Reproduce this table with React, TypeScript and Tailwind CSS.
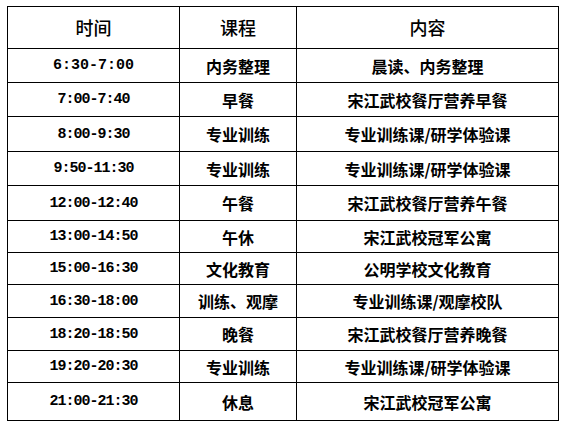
const rows = [
  { time: '6:30-7:00', course: '内务整理', content: '晨读、内务整理', h: 'h-[34px]', t: 'tracking-[0px]' },
  { time: '7:00-7:40', course: '早餐', content: '宋江武校餐厅营养早餐', h: 'h-[34px]', t: 'tracking-[-1px]' },
  { time: '8:00-9:30', course: '专业训练', content: '专业训练课/研学体验课', h: 'h-[35px]', t: 'tracking-[-1px]' },
  { time: '9:50-11:30', course: '专业训练', content: '专业训练课/研学体验课', h: 'h-[34px]', t: 'tracking-[-1px]' },
  { time: '12:00-12:40', course: '午餐', content: '宋江武校餐厅营养午餐', h: 'h-[35px]', t: 'tracking-[-1px]' },
  { time: '13:00-14:50', course: '午休', content: '宋江武校冠军公寓', h: 'h-[32px]', t: 'tracking-[-1px]' },
  { time: '15:00-16:30', course: '文化教育', content: '公明学校文化教育', h: 'h-[32px]', t: 'tracking-[-1px]' },
  { time: '16:30-18:00', course: '训练、观摩', content: '专业训练课/观摩校队', h: 'h-[33px]', t: 'tracking-[-1px]' },
  { time: '18:20-18:50', course: '晚餐', content: '宋江武校餐厅营养晚餐', h: 'h-[33px]', t: 'tracking-[-1px]' },
  { time: '19:20-20:30', course: '专业训练', content: '专业训练课/研学体验课', h: 'h-[32px]', t: 'tracking-[-1px]' },
  { time: '21:00-21:30', course: '休息', content: '宋江武校冠军公寓', h: 'h-[38px]', t: 'tracking-[-1px]' },
];

const cjk = "font-['Noto_Sans_CJK_SC',sans-serif]";

function Cell({ w, children, className = '' }: { w: string; children: React.ReactNode; className?: string }) {
  return (
    <div className={`${w} flex items-center justify-center border-r border-b border-black ${className}`}>
      {children}
    </div>
  );
}

export default function App() {
  return (
    <div className="w-[564px] h-[428px] bg-white pl-[7px] pt-[6px]">
      <div className="w-[552px] border-l border-t border-black text-black">
        {/* header */}
        <div className={`flex h-[42px] ${cjk} text-[18px] font-medium`}>
          <Cell w="w-[172px]">时间</Cell>
          <Cell w="w-[117px]">课程</Cell>
          <Cell w="w-[262px]">内容</Cell>
        </div>
        {rows.map((r) => (
          <div key={r.time} className={`flex ${r.h}`}>
            <Cell w="w-[172px]" className={`pt-[2px] font-['Liberation_Mono',monospace] font-bold text-[15px] ${r.t}`}>
              {r.time}
            </Cell>
            <Cell w="w-[117px]" className={`${cjk} font-bold text-[16px]`}>
              {r.course}
            </Cell>
            <Cell w="w-[262px]" className={`${cjk} font-bold text-[16px]`}>
              {r.content}
            </Cell>
          </div>
        ))}
      </div>
    </div>
  );
}
